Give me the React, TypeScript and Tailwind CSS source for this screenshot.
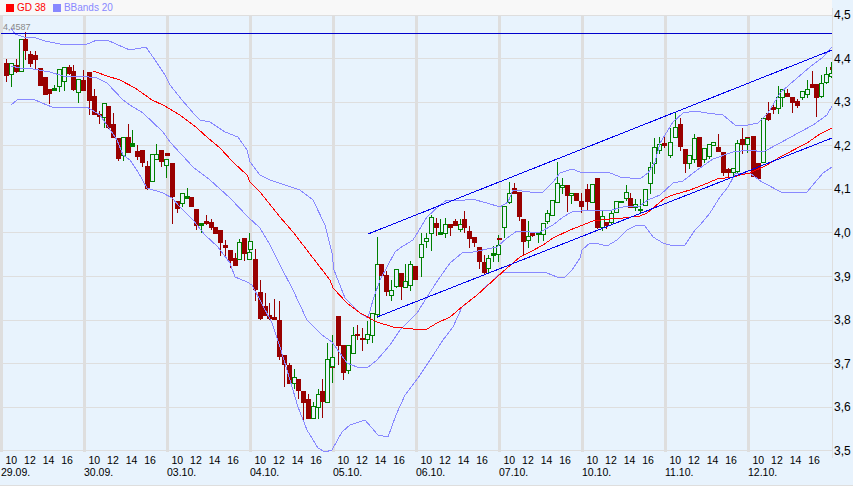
import React from "react";

type C = [number, number, number, number, number, number];
// x, kind (0 red, 1 hollow green, 2 green dash), body top, body bottom, wick top, wick bottom
const candles: C[] = [
  [6,0,63,75,59,81],[11,1,63,74,63,86],[16,0,65,71,59,72],[21,1,39,71,39,71],[25,0,39,50,32,59],[30,0,54,63,51,66],[35,0,55,59,51,68],[40,0,68,85,68,85],[45,0,77,94,77,94],[49,0,89,93,89,103],[54,2,88,90,85,90],[59,1,69,86,69,91],[64,1,67,81,67,90],[69,0,67,73,65,74],[73,0,71,89,65,90],[78,1,79,92,79,102],[83,0,80,90,70,90],
  [89,0,72,100,72,114],[94,0,96,114,89,114],[99,0,114,116,111,123],[104,1,103,117,103,127],[108,0,106,127,106,128],[113,0,124,137,113,137],[118,0,138,158,138,160],[123,1,137,155,137,160],[128,0,137,152,124,152],[132,2,143,146,130,146],[137,0,151,156,145,159],[142,0,150,162,150,166],[147,0,166,188,161,189],[152,1,154,181,154,181],[156,1,154,159,144,159],[161,0,150,161,150,166],[167,0,153,155,153,155],[166,1,159,165,159,177],
  [172,0,163,196,163,223],[177,0,201,208,201,212],[182,1,193,203,193,206],[187,2,196,198,188,198],[191,0,197,206,197,206],[196,0,209,225,209,229],[201,2,223,225,223,232],[206,0,221,223,215,224],[211,0,222,227,219,229],[215,0,227,233,227,233],[220,0,230,242,230,255],[225,0,245,247,240,255],[230,0,250,260,250,267],[235,0,258,265,253,265],[239,1,242,259,239,259],[244,0,238,253,238,260],[249,1,252,259,233,259],[250,1,241,249,241,249],
  [255,0,259,289,249,300],[260,0,292,318,280,319],[265,0,306,315,293,315],[269,0,315,318,303,319],[274,0,317,319,299,319],[279,0,320,356,301,359],[284,0,355,364,355,386],[289,0,365,383,363,383],[294,1,377,383,369,388],[298,0,379,390,379,398],[303,0,391,402,391,421],[308,0,399,418,394,418],[313,1,406,418,402,418],[318,1,394,407,389,418],[322,0,391,401,379,417],[327,1,359,402,343,402],[332,0,365,367,365,367],[332,1,357,366,335,382],
  [338,0,316,345,316,364],[343,0,345,372,345,379],[348,1,345,370,345,373],[353,1,335,353,327,353],[357,0,334,335,325,339],[362,0,338,339,328,350],[367,1,334,339,321,343],[372,1,313,335,313,342],[377,1,264,314,237,317],[381,0,264,275,264,275],[386,0,275,291,271,295],[391,1,290,295,280,300],[396,1,269,286,269,287],[401,0,273,286,273,299],[405,1,281,287,264,287],[410,1,264,285,261,290],[415,0,266,279,266,279],
  [421,1,244,257,233,276],[426,1,238,241,233,247],[431,1,217,233,215,250],[436,0,223,227,218,235],[440,2,232,234,219,234],[445,1,224,233,218,237],[450,0,224,227,224,235],[455,0,221,225,219,225],[460,1,224,229,219,231],[464,0,219,227,211,232],[469,0,231,238,226,247],[474,0,237,242,237,246],[479,0,247,261,247,268],[484,0,262,272,255,274],[488,1,258,268,255,272],[493,2,253,255,246,261],[498,1,245,254,235,261],[499,0,238,239,238,239],
  [504,1,206,227,206,237],[509,1,193,202,182,203],[514,0,188,193,183,193],[519,0,192,216,192,220],[523,0,219,241,219,255],[528,1,236,240,221,247],[532,0,233,235,233,236],[538,2,232,234,232,242],[543,1,223,234,223,240],[547,1,213,221,210,223],[552,1,200,215,200,215],[557,1,183,202,162,202],[562,1,185,187,178,193],[567,0,185,195,185,211],[571,1,193,195,193,203],[576,0,193,200,193,200],[581,0,201,206,193,212],
  [587,0,189,201,184,209],[592,1,184,202,184,202],[597,0,178,227,178,228],[602,1,216,227,211,230],[606,0,222,225,222,228],[611,1,213,222,211,223],[616,1,201,212,201,212],[621,2,201,202,201,202],[626,1,192,198,185,200],[630,0,198,207,193,207],[635,1,204,207,199,210],[640,2,209,210,199,212],[645,1,189,205,189,205],[650,1,167,183,162,193],[654,1,147,163,138,173],[659,1,144,150,137,153],[664,0,143,145,137,147],
  [670,1,142,155,128,157],[675,1,127,137,113,137],[680,0,124,146,118,150],[685,0,149,163,149,172],[689,1,155,163,155,168],[694,1,138,159,134,162],[699,0,137,166,137,166],[704,1,148,159,148,162],[709,1,144,156,144,158],[713,1,142,145,142,145],[718,0,147,151,134,151],[723,0,152,172,152,175],[728,0,169,172,168,178],[733,1,168,172,168,175],[737,1,143,171,140,172],[742,0,139,144,128,153],[747,0,137,138,137,138],[747,1,138,144,138,152],
  [753,0,136,176,136,176],[758,0,163,178,163,178],[763,1,118,162,118,162],[768,0,113,119,102,120],[773,0,107,109,103,113],[778,1,97,108,86,113],[782,1,89,97,89,106],[787,0,93,96,89,96],[792,0,97,102,97,112],[797,0,101,105,99,107],[802,1,91,97,91,99],[807,1,89,94,80,97],[812,0,84,87,71,87],[816,0,84,97,84,116],[821,1,83,96,75,97],[826,1,74,82,67,83],[832,0,67,69,67,69],[831,1,73,76,62,77],
];

const upper = "11,28 15,34 24,37 33,37 45,41 60,44 85,45 97,40 107,40 125,48 130,50 146,47 155,60 165,75 170,85 182,100 195,115 200,120 210,122 225,132 238,137 247,150 250,162 260,175 270,180 285,185 300,190 313,200 325,225 332,253 334,270 345,298 360,313 368,318 373,300 380,280 395,252 400,248 413,240 427,217 440,205 447,200 458,201 472,199 487,203 500,207 508,202 513,190 530,192 543,192 553,182 560,173 572,169 580,172 590,172 608,172 620,177 640,179 648,173 655,162 660,143 673,122 683,113 695,111 707,113 723,115 735,125 743,126 758,123 768,113 780,93 797,78 810,67 823,57 832,47";
const middle = "11,66 20,68 33,69 50,72 63,76 80,76 97,78 107,83 123,100 130,105 143,113 163,132 170,142 193,167 210,180 230,198 248,217 260,228 270,245 280,265 293,290 307,320 322,335 332,342 347,363 357,367 367,368 377,360 390,345 400,330 417,313 427,297 438,280 450,263 462,253 473,252 497,247 507,238 517,231 530,232 540,232 553,225 563,217 572,212 590,210 608,211 623,207 640,206 648,200 660,195 673,183 683,181 697,170 713,159 733,152 750,150 763,152 780,143 800,132 813,125 827,115 832,106";
const lower = "11,105 17,100 33,99 42,103 52,107 70,108 87,107 100,115 117,140 123,155 130,160 138,172 147,188 163,193 172,198 180,207 193,220 205,235 218,247 230,263 235,277 247,282 252,285 272,323 280,347 290,380 298,407 307,430 318,448 325,452 332,450 342,432 350,425 365,420 378,435 388,437 396,415 405,395 418,378 430,360 443,340 453,327 462,307 477,295 493,280 502,272 513,272 520,272 547,273 557,277 565,277 572,270 580,258 582,250 590,243 595,243 607,246 617,240 627,230 637,225 645,226 653,237 663,243 673,246 685,245 695,230 700,225 710,213 720,197 728,187 735,174 750,173 762,182 783,193 807,192 823,173 832,167";
const gd = "93,71 107,76 120,80 135,88 152,100 163,105 180,115 197,128 208,138 220,148 233,162 247,175 250,182 260,192 280,217 293,232 313,258 330,280 333,288 347,303 360,313 377,322 393,327 413,329 427,329 437,323 450,317 463,306 477,295 497,277 507,268 520,257 530,252 543,245 553,238 570,230 593,221 610,219 623,218 640,216 647,213 653,208 665,198 673,195 690,190 703,185 717,179 733,177 740,175 750,173 767,165 780,157 807,143 820,134 832,128";

const days = ["29.09.", "30.09.", "03.10.", "04.10.", "05.10.", "06.10.", "07.10.", "10.10.", "11.10.", "12.10."];
const prices = ["4,5", "4,4", "4,3", "4,2", "4,1", "4,0", "3,9", "3,8", "3,7", "3,6", "3,5"];

function Candle({ c }: { c: C }) {
  const [x, kind, top, bottom, hi, lo] = c;
  const color = kind === 0 ? "#990000" : "#008000";
  return (
    <g shapeRendering="crispEdges">
      <rect x={x} y={hi} width={1} height={lo - hi + 1} fill={color} />
      {kind === 1 ? (
        <rect x={x - 1.5} y={top + 0.5} width={4} height={bottom - top} fill="#e8f3fd" stroke={color} strokeWidth={1} />
      ) : (
        <rect x={x - 2} y={top} width={5} height={bottom - top + 1} fill={color} />
      )}
    </g>
  );
}

function Chart() {
  const hLines = Array.from({ length: 10 }, (_, i) => 58 + Math.round(i * 43.6));
  const vLines = Array.from({ length: 10 }, (_, i) => i * 83);
  return (
    <svg width={832} height={437} viewBox="0 15 832 437" className="block">
      <rect x={0} y={15} width={832} height={437} fill="#e8f3fd" />
      <rect x={0} y={15} width={832} height={1} fill="#dedede" shapeRendering="crispEdges" />
      {hLines.map((y) => (
        <rect key={y} x={0} y={y} width={832} height={1} fill="#dedede" shapeRendering="crispEdges" />
      ))}
      {vLines.map((x) => (
        <rect key={x} x={x} y={15} width={3} height={437} fill="#dedede" shapeRendering="crispEdges" />
      ))}
      {candles.map((c, i) => (
        <Candle key={i} c={c} />
      ))}
      <g fill="none" strokeWidth={1} shapeRendering="crispEdges">
        <polyline points={upper} stroke="#8888ff" />
        <polyline points={middle} stroke="#8888ff" />
        <polyline points={lower} stroke="#8888ff" />
        <polyline points={gd} stroke="#ff0000" />
        <line x1={1} y1={33.5} x2={832} y2={33.5} stroke="#0000cc" />
        <line x1={368} y1={234} x2={832} y2={50} stroke="#0000ee" />
        <line x1={377} y1={317} x2={832} y2={138} stroke="#0000ee" />
      </g>
    </svg>
  );
}

export default function App() {
  return (
    <div className="flex h-[486px] w-[853px] flex-col overflow-hidden bg-[#e8f3fd] font-['Liberation_Sans',Arial,sans-serif] text-[10.5px] text-black">
      <div className="flex h-[15px] w-[832px] shrink-0 items-center bg-[#f8f8f8] pl-[6px] text-[10px] leading-none">
        <span className="h-[8px] w-[8px] bg-[#ff0000]" />
        <span className="ml-[3px] text-[#ff0000]">GD 38</span>
        <span className="ml-[7px] h-[8px] w-[8px] bg-[#8888ff]" />
        <span className="ml-[3px] text-[#8888ff]">BBands 20</span>
      </div>
      <div className="flex h-[437px] shrink-0">
        <div className="relative w-[832px]">
          <Chart />
          <span className="absolute left-[3px] top-[8px] text-[9px] leading-none text-[#888888]">4,4587</span>
        </div>
        <div className="relative z-10 -mt-[7px] flex h-[450px] flex-1 flex-col justify-between border-l border-[#dedede] pl-[1px] text-[12px] leading-[14px]">
          {prices.map((p) => (
            <span key={p}>{p}</span>
          ))}
        </div>
      </div>
      <div className="flex w-[832px] flex-1 flex-col">
        <div className="grid grid-cols-[repeat(10,83px)] pt-[2px]">
          {days.map((d) => (
            <div key={d} className="flex flex-col">
              <div className="flex pl-[2px] leading-[12px]">
                {["10", "12", "14", "16"].map((h) => (
                  <span key={h} className="w-[18.6px] text-center">
                    {h}
                  </span>
                ))}
              </div>
              <span className="pl-[1px] leading-[12px]">{d}</span>
            </div>
          ))}
        </div>
      </div>
      <div className="h-[1px] w-full shrink-0 bg-[#dedede]" />
    </div>
  );
}
